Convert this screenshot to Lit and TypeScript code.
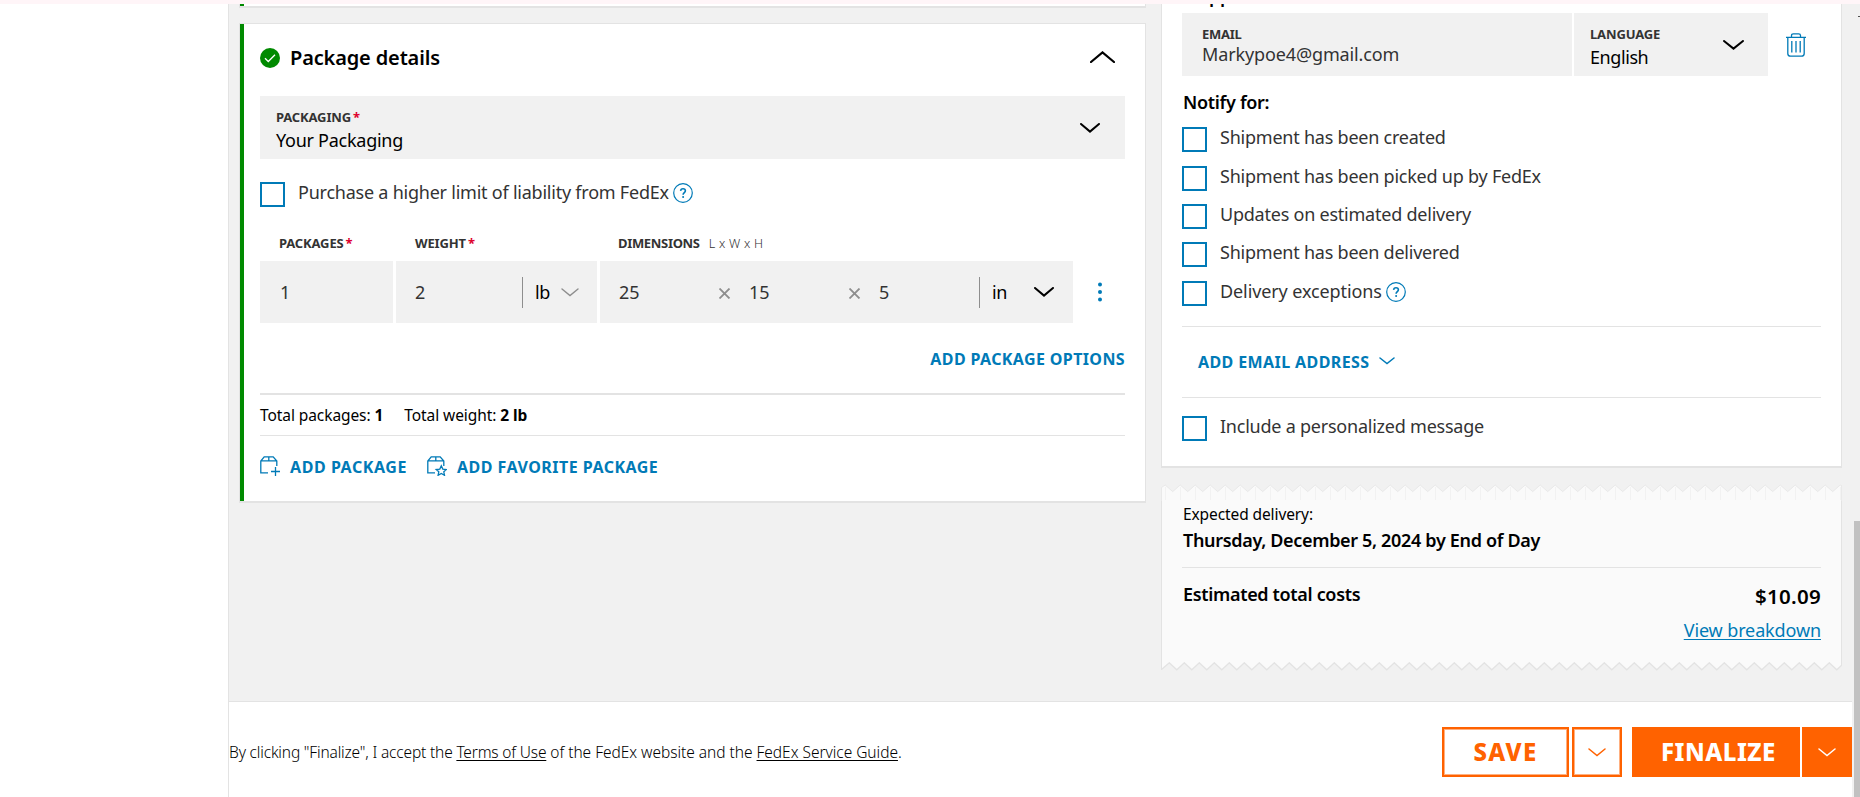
import { LitElement, html, css, svg, nothing } from 'lit';
import { customElement, property } from 'lit/decorators.js';
import { classMap } from 'lit/directives/class-map.js';

const base = css`
  :host { box-sizing: border-box; }
  *, *::before, *::after { box-sizing: border-box; }
  svg { display: block; flex: none; }
`;

const chevron = (w: number, h: number, stroke = 2, up = false) => html`
  <svg width=${w} height=${h} viewBox="0 0 ${w} ${h}" fill="none" stroke="currentColor" stroke-width=${stroke} stroke-linecap="round" stroke-linejoin="miter">
    <path d=${up ? `M1 ${h - 1}L${w / 2} 1.4L${w - 1} ${h - 1}` : `M1 1L${w / 2} ${h - 1.4}L${w - 1} 1`} />
  </svg>`;

const helpIcon = html`
  <svg width="20" height="20" viewBox="0 0 20 20" fill="none" stroke="#007ab7">
    <circle cx="10" cy="10" r="9.3" stroke-width="1.2" />
    <path d="M7.6 7.9C7.7 6.5 8.7 5.7 10 5.7S12.4 6.5 12.4 7.8C12.4 9.5 10.1 9.6 10.1 11.7" stroke-width="1.6" />
    <circle cx="10.1" cy="14" r="1" fill="#007ab7" stroke="none" />
  </svg>`;

const box = svg`<path d="M8 16.8H.8V5L4.2.8H13.2L16.8 5V10M.8 4.8H16.8M8.8 .8V4.8" />`;

const packageIcon = (badge: 'plus' | 'star') => html`
  <svg width="20" height="20" viewBox="0 0 20 20" fill="none" stroke="#007ab7" stroke-width="1.3">
    ${box}
    ${badge === 'plus'
      ? svg`<path d="M15.5 11V20M11 15.5H20" />`
      : svg`<path d="M14.3 9.8L15.8 13.1L19.4 13.5L16.8 15.8L17.5 19.3L14.3 17.5L11.1 19.3L11.8 15.8L9.2 13.5L12.8 13.1Z" fill="#fff" />`}
  </svg>`;

@customElement('check-row')
class CheckRow extends LitElement {
  @property() label = '';
  @property({ type: Boolean }) help = false;
  @property({ type: Boolean }) loose = false;
  static styles = [base, css`
    :host { display: flex; align-items: center; height: 25px; color: #333; }
    .tick { width: 25px; height: 25px; border: 2px solid #007ab7; background: #fff; flex: none; margin-right: 13px; }
    .text { font-size: 18px; line-height: 20px; letter-spacing: -.23px; margin-bottom: 5px; white-space: nowrap; }
    .loose { letter-spacing: -.1px; }
    .help { margin: 0 0 3px 4px; }
  `];
  render() {
    return html`<span class="tick"></span><span class=${classMap({ text: true, loose: this.loose })}>${this.label}</span>
      ${this.help ? html`<span class="help">${helpIcon}</span>` : nothing}`;
  }
}

@customElement('receipt-edge')
class ReceiptEdge extends LitElement {
  @property() side: 'top' | 'bottom' = 'top';
  static styles = [base, css`:host { display: block; }`];
  render() {
    const teeth = Array.from({ length: 46 }, (_, i) => i * 15);
    if (this.side === 'top') {
      const d = 'M.5 3.5' + teeth.map(x => `L${x + 4.2} 1L${x + 11.7} 7.6`).join('');
      return html`<svg width="681" height="17" viewBox="0 0 681 17">
        <path d="${d}V17H.5Z" fill="#fafafa" />
        <path d=${d} fill="none" stroke="#e9e9e9" />
        ${teeth.map(x => svg`<path d="M${x + 4.5} 3V16" stroke="#f2f2f2" />`)}
        <path d="M.5 3.5V17M680.5 1V17" stroke="#e9e9e9" />
      </svg>`;
    }
    const d = 'M.5 7.5' + teeth.map(x => `L${x + 8.3} .8L${x + 15.8} 7.8`).join('');
    return html`<svg width="681" height="9" viewBox="0 0 681 9">
      <path d="M.5 0${d.replace('M', 'L')}V0Z" fill="#fafafa" />
      <path d="${d}" fill="none" stroke="#e3e3e3" stroke-width="1.3" />
      <path d="M.5 0V8M680.5 0V4" stroke="#e3e3e3" />
    </svg>`;
  }
}

@customElement('package-card')
class PackageCard extends LitElement {
  static styles = [base, css`
    :host { display: block; background: #fff; border: 1px solid #e3e3e3; border-bottom-width: 2px; }
    .body { border-left: 4px solid #008a00; padding: 0 20px 25px 16px; }
    .head { display: flex; align-items: center; height: 68px; margin-bottom: 4px; }
    .title { font-size: 20px; font-weight: 600; line-height: 24px; letter-spacing: -.15px; margin: 0 auto 0 10px; }
    .up { margin: 0 10px 3px 0; }
    .cap { font-size: 13px; font-weight: 700; line-height: 16px; color: #333; letter-spacing: -.15px; white-space: nowrap; }
    .dims { letter-spacing: -.32px; }
    .lwh { font-size: 12.5px; font-weight: 300; line-height: 12px; margin-left: 9px; letter-spacing: .25px; }
    .req { color: #de002e; margin-left: 2px; line-height: 12px; }
    .select { display: flex; align-items: center; justify-content: space-between; height: 63px; background: #f1f1f1; padding: 0 25px 0 16px; }
    .texts { padding-top: 5px; }
    .value { font-size: 18px; line-height: 22px; margin-top: 4px; letter-spacing: -.26px; }
    .liability { margin-top: 23px; }
    .grid { display: grid; grid-template-columns: 133px 201px 473px; column-gap: 3px; }
    .labels { margin-top: 28px; height: 26px; }
    .labels > * { padding-left: 19px; }
    .labels > :last-child { padding-left: 18px; }
    .row { display: flex; align-items: center; }
    .cell { display: flex; align-items: center; height: 62px; background: #f1f1f1; font-size: 18px; color: #333; padding-left: 19px; }
    .cell:first-child { padding-left: 20px; }
    .num { line-height: 20px; }
    .w { width: 107px; }
    .d { width: 100px; }
    .times { width: 30px; color: #8e8e8e; margin-top: 2px; }
    .unit { display: flex; align-items: center; height: 31px; border-left: 1px solid #8e8e8e; padding: 0 0 1px 12px; color: #000; letter-spacing: -.3px; }
    .gray { color: #8e8e8e; margin: 1px 0 0 11px; }
    .black { margin: 1px 0 0 27px; }
    .dots { margin-left: 25px; }
    .link { color: #007ab7; font-size: 16px; font-weight: 700; line-height: 20px; letter-spacing: .38px; white-space: nowrap; }
    .options { margin: 26px 0 24px; text-align: right; }
    .totals { display: flex; gap: 21px; height: 43px; border-top: 2px solid #e3e3e3; border-bottom: 1px solid #e3e3e3; font-size: 15.5px; line-height: 40px; letter-spacing: -.08px; }
    .actions { display: flex; align-items: center; margin-top: 20px; height: 20px; }
    .actions .link { margin: 1px 20px 0 10px; letter-spacing: .49px; }
    .actions .first { letter-spacing: .56px; }
  `];
  render() {
    const req = html`<span class="req">*</span>`;
    const times = html`<svg class="times" width="30" height="11" viewBox="0 0 30 11">
      <path d="M.5 .5L10.5 10.5M10.5 .5L.5 10.5" stroke="currentColor" stroke-width="1.8" /></svg>`;
    return html`<div class="body">
      <div class="head">
        <svg width="20" height="20" viewBox="0 0 20 20"><circle cx="10" cy="10" r="10" fill="#008a00" />
          <path d="M5 10.2L8.3 13.5L15 6.7" fill="none" stroke="#fff" stroke-width="1.3" /></svg>
        <span class="title">Package details</span>
        <span class="up">${chevron(25, 12, 2.2, true)}</span>
      </div>
      <div class="select">
        <div class="texts"><div class="cap">PACKAGING${req}</div><div class="value">Your Packaging</div></div>
        ${chevron(20, 10, 2)}
      </div>
      <check-row class="liability" label="Purchase a higher limit of liability from FedEx" help></check-row>
      <div class="grid labels">
        <div class="cap">PACKAGES${req}</div>
        <div class="cap">WEIGHT${req}</div>
        <div class="cap dims">DIMENSIONS<span class="lwh">L x W x H</span></div>
      </div>
      <div class="row">
        <div class="grid">
          <div class="cell"><span class="num">1</span></div>
          <div class="cell"><span class="num w">2</span>
            <span class="unit">lb<span class="gray">${chevron(18, 9, 1.4)}</span></span></div>
          <div class="cell"><span class="num d">25</span>${times}<span class="num d">15</span>${times}<span class="num d">5</span>
            <span class="unit">in<span class="black">${chevron(20, 10, 2)}</span></span></div>
        </div>
        <svg class="dots" width="4" height="20" viewBox="0 0 4 20" fill="#007ab7"><circle cx="2" cy="2.4" r="2" /><circle cx="2" cy="10" r="2" /><circle cx="2" cy="17.6" r="2" /></svg>
      </div>
      <div class="link options">ADD PACKAGE OPTIONS</div>
      <div class="totals"><span>Total packages: <b>1</b></span><span>Total weight: <b>2 lb</b></span></div>
      <div class="actions">
        ${packageIcon('plus')}<span class="link first">ADD PACKAGE</span>
        ${packageIcon('star')}<span class="link">ADD FAVORITE PACKAGE</span>
      </div>
    </div>`;
  }
}

@customElement('notify-card')
class NotifyCard extends LitElement {
  static styles = [base, css`
    :host { display: block; background: #fff; border: 1px solid #e3e3e3; border-top: 0; border-bottom-width: 2px; padding: 0 20px 25px; }
    .who { font-size: 18px; font-weight: 600; line-height: 20px; margin: -18px 0 7px; padding-left: 1px; letter-spacing: -.2px; }
    .row { display: flex; align-items: center; }
    .field { height: 63px; background: #f1f1f1; padding: 13px 0 0 20px; }
    .email { width: 390px; margin-right: 2px; }
    .lang { width: 194px; padding: 0 24px 0 16px; display: flex; align-items: center; justify-content: space-between; }
    .texts { padding-top: 5px; }
    .cap { font-size: 13px; font-weight: 700; line-height: 16px; color: #333; letter-spacing: -.15px; }
    .tight { letter-spacing: -.3px; }
    .addr { font-size: 18px; line-height: 22px; margin-top: 1px; color: #333; letter-spacing: -.13px; }
    .value { font-size: 18px; line-height: 22px; margin-top: 4px; letter-spacing: -.42px; }
    .chev { padding-top: 1px; }
    .trash { margin: 1px 0 0 18px; }
    h3 { font-size: 18px; font-weight: 600; line-height: 22px; margin: 15px 0 14.1px; padding-left: 1px; letter-spacing: -.3px; }
    .checks { display: grid; row-gap: 13.45px; }
    .add { display: flex; align-items: center; height: 72px; margin-top: 20.1px; padding: 0 0 1px 16px; border: solid #e3e3e3; border-width: 1px 0; color: #007ab7; }
    .link { font-size: 16px; font-weight: 700; line-height: 20px; letter-spacing: .4px; margin: 1px 9px 0 0; }
    .message { margin-top: 18px; }
  `];
  render() {
    return html`
      <div class="who">Shipper</div>
      <div class="row">
        <div class="field email"><div class="cap tight">EMAIL</div><div class="addr">Markypoe4@gmail.com</div></div>
        <div class="field lang"><div class="texts"><div class="cap">LANGUAGE</div><div class="value">English</div></div>
          <span class="chev">${chevron(21, 10, 2)}</span></div>
        <svg class="trash" width="20" height="24" viewBox="0 0 20 24" fill="none" stroke="#007ab7" stroke-width="1.3">
          <path d="M0 4.4H20M5.5 4V2.6Q5.5.8 7.3.8H12.7Q14.5.8 14.5 2.6V4M1.8 4.6V20.5Q1.8 23.2 4.5 23.2H15.5Q18.2 23.2 18.2 20.5V4.6M5.8 8V19.5M10 8V19.5M14.2 8V19.5" />
        </svg>
      </div>
      <h3>Notify for:</h3>
      <div class="checks">
        ${['Shipment has been created', 'Shipment has been picked up by FedEx', 'Updates on estimated delivery', 'Shipment has been delivered', 'Delivery exceptions']
          .map((l, i) => html`<check-row .label=${l} .help=${i === 4} .loose=${i === 4}></check-row>`)}
      </div>
      <div class="add"><span class="link">ADD EMAIL ADDRESS</span>${chevron(16, 8, 1.5)}</div>
      <check-row class="message" label="Include a personalized message"></check-row>`;
  }
}

@customElement('cost-receipt')
class CostReceipt extends LitElement {
  static styles = [base, css`
    :host { display: block; }
    .body { height: 161px; background: #fafafa; border: solid #e3e3e3; border-width: 0 1px; padding: 3px 20px 0; }
    .small { font-size: 15.5px; line-height: 20px; letter-spacing: -.1px; padding-left: 1px; }
    .strong { font-size: 18px; font-weight: 600; line-height: 22px; letter-spacing: -.33px; padding-left: 1px; }
    .when { margin-top: 5px; padding-bottom: 16px; border-bottom: 1px solid #e3e3e3; }
    .costs { display: flex; justify-content: space-between; margin-top: 15px; }
    .right { text-align: right; padding-top: 1px; }
    .price { font-size: 20.5px; font-weight: 600; line-height: 24px; letter-spacing: .3px; }
    .view { font-size: 18px; line-height: 22px; margin-top: 11px; color: #007ab7; letter-spacing: -.12px; text-decoration: underline; text-decoration-thickness: 1px; text-underline-offset: 2px; text-decoration-skip-ink: none; }
  `];
  render() {
    return html`<receipt-edge side="top"></receipt-edge>
      <div class="body">
        <div class="small">Expected delivery:</div>
        <div class="strong when">Thursday, December 5, 2024 by End of Day</div>
        <div class="costs"><div class="strong">Estimated total costs</div>
          <div class="right"><div class="price">$10.09</div><div class="view">View breakdown</div></div></div>
      </div>
      <receipt-edge side="bottom"></receipt-edge>`;
  }
}

@customElement('action-footer')
class ActionFooter extends LitElement {
  static styles = [base, css`
    :host { display: flex; align-items: center; height: 96px; width: 1623px; background: #fff; border-top: 1px solid #e3e3e3; padding-top: 5px; }
    .terms { font-size: 15.5px; font-weight: 300; line-height: 20px; letter-spacing: -.03px; margin-right: auto; white-space: nowrap; }
    .lead { letter-spacing: -.17px; }
    u { text-decoration-thickness: 1px; text-underline-offset: 2px; text-decoration-skip-ink: none; }
    .btn { display: flex; align-items: center; justify-content: center; height: 50px; font-size: 24px; font-weight: 800; line-height: 28px; background: #ff6200; color: #fff; }
    .outline { background: #fff; color: #ff6200; border: 2px solid #ff6200; box-shadow: inset 0 0 0 1px #ffb080; }
    .save { width: 127px; margin-right: 3px; letter-spacing: 1.3px; padding: 0; }
    .more { width: 50px; padding-top: 1px; }
    .gap { margin-right: 10px; }
    .final { width: 168px; margin-right: 2px; letter-spacing: .5px; justify-content: flex-start; padding: 0 0 0 29px; }
  `];
  render() {
    const more = (outline: boolean) => html`<span class=${classMap({ btn: true, more: true, outline, gap: outline })}>${chevron(18, 9, 1.5)}</span>`;
    return html`<span class="terms"><span class="lead">By clicking "Finalize", I accept the <u>Terms of Use</u></span> of the FedEx website and the <u>FedEx Service Guide</u>.</span>
      <span class="btn outline save">SAVE</span>${more(true)}
      <span class="btn final">FINALIZE</span>${more(false)}`;
  }
}

@customElement('app-root')
class AppRoot extends LitElement {
  static styles = [base, css`
    :host { display: flex; flex-direction: column; width: 1860px; height: 797px; overflow: hidden; background: #fff; color: #000; font-family: "Noto Sans", "Open Sans", sans-serif; }
    .strip { height: 4px; flex: none; background: #fff5f8; position: relative; z-index: 1; }
    .shell { display: flex; flex: 1; min-height: 0; padding-left: 228px; }
    .page { display: flex; flex-direction: column; width: 1624px; border-left: 1px solid #e3e3e3; background: #f1f1f1; }
    .columns { display: flex; gap: 15px; height: 697px; flex: none; padding-left: 10px; }
    .left { width: 907px; }
    .right { width: 681px; }
    .previous { height: 4px; background: #fff; border: solid #e3e3e3; border-width: 0 1px 2px; margin-bottom: 15px; }
    .previous::before { content: ""; display: block; width: 4px; height: 2px; background: #008a00; }
    cost-receipt { margin-top: 16px; }
    .bar { width: 8px; background: #f1f1f1; display: flex; flex-direction: column; align-items: flex-end; justify-content: space-between; }
    .arrow { width: 2px; height: 1px; background: #505050; margin-top: 12px; }
    .thumb { width: 6px; height: 276px; background: #c1c1c1; }
  `];
  render() {
    return html`<div class="strip"></div>
      <div class="shell">
        <div class="page">
          <div class="columns">
            <div class="left"><div class="previous"></div><package-card></package-card></div>
            <div class="right"><notify-card></notify-card><cost-receipt></cost-receipt></div>
          </div>
          <action-footer></action-footer>
        </div>
        <div class="bar"><div class="arrow"></div><div class="thumb"></div></div>
      </div>`;
  }
}
